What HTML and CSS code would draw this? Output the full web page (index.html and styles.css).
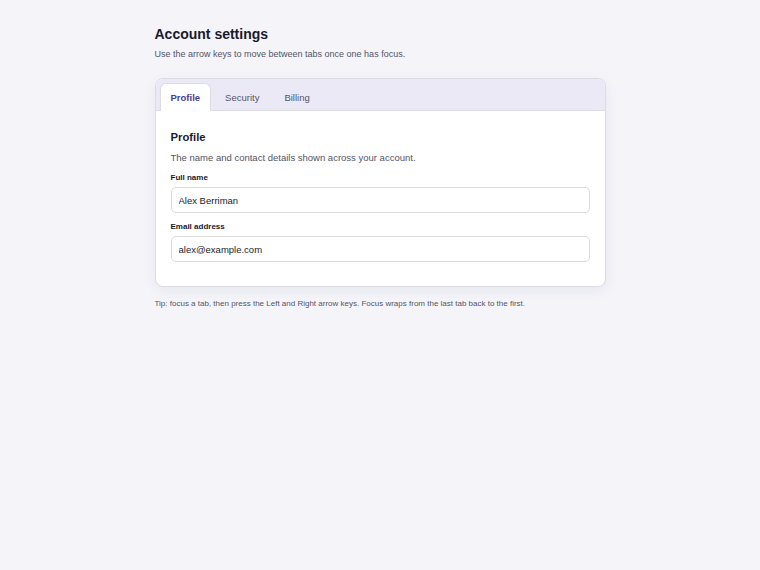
FILE: index.html
```html
<!DOCTYPE html>
<html lang="en">
<head>
<meta charset="utf-8">
<title>Account settings</title>
<link rel="stylesheet" href="styles.css">
</head>
<body>
<main class="page">
  <h1 class="title">Account settings</h1>
  <p class="subtitle">Use the arrow keys to move between tabs once one has focus.</p>
  <section class="card">
    <div class="tabs" role="tablist">
      <button class="tab active" role="tab" aria-selected="true">Profile</button>
      <button class="tab" role="tab" aria-selected="false">Security</button>
      <button class="tab" role="tab" aria-selected="false">Billing</button>
    </div>
    <div class="panel" role="tabpanel">
      <h2 class="panel-title">Profile</h2>
      <p class="panel-desc">The name and contact details shown across your account.</p>
      <label class="field">
        <span class="label">Full name</span>
        <input class="input" type="text" value="Alex Berriman">
      </label>
      <label class="field">
        <span class="label">Email address</span>
        <input class="input" type="email" value="alex@example.com">
      </label>
    </div>
  </section>
  <p class="tip">Tip: focus a tab, then press the Left and Right arrow keys. Focus wraps from the last tab back to the first.</p>
</main>
</body>
</html>
```

FILE: styles.css
```css
html, body {
  margin: 0;
  padding: 0;
  background: #f4f4f9;
  font-family: "Liberation Sans", Arial, sans-serif;
  color: #1c1b29;
}

.page {
  width: 451px;
  margin: 0 auto;
  padding-top: 24px;
}

.title {
  margin: 0;
  font-size: 14px;
  line-height: 20px;
  font-weight: 700;
  color: #1a1a2b;
}

.subtitle {
  margin: 4px 0 0;
  font-size: 9px;
  line-height: 12px;
  color: #545468;
}

.card {
  margin-top: 18px;
  background: #ffffff;
  border: 1px solid #dddbe8;
  border-radius: 8px;
  box-shadow: 0 4px 14px rgba(40, 30, 90, 0.06);
  overflow: hidden;
}

.tabs {
  display: flex;
  gap: 3px;
  padding: 4px 4px 0;
  background: #ece9f6;
  border-bottom: 1px solid #dddbe8;
}

.tab {
  box-sizing: border-box;
  height: 28px;
  font-family: inherit;
  font-size: 9.5px;
  line-height: 14px;
  padding: 0 10px;
  background: transparent;
  border: 1px solid transparent;
  border-bottom: none;
  border-radius: 6px 6px 0 0;
  color: #555468;
  margin-bottom: -1px;
  cursor: pointer;
}

.tab.active {
  background: #ffffff;
  border-color: #dddbe8;
  color: #4a3a9c;
  font-weight: 700;
}

.panel {
  padding: 18px 15px 24px;
}

.panel-title {
  margin: 0;
  font-size: 11.25px;
  line-height: 16px;
  font-weight: 700;
  color: #1a1a2b;
}

.panel-desc {
  margin: 6px 0 0;
  font-size: 9.5px;
  line-height: 14px;
  color: #545468;
}

.field {
  display: flex;
  flex-direction: column;
  margin-top: 7px;
}

.field + .field {
  margin-top: 8px;
}

.label {
  font-size: 8px;
  line-height: 12px;
  font-weight: 700;
  color: #1a1a2b;
  margin-bottom: 3px;
}

.input {
  box-sizing: border-box;
  height: 26px;
  padding: 0 7px;
  font-family: inherit;
  font-size: 9.5px;
  color: #1c1b29;
  background: #ffffff;
  border: 1px solid #d9d8e2;
  border-radius: 5px;
  outline: none;
}

.tip {
  margin: 11px 0 0;
  font-size: 8px;
  line-height: 12px;
  color: #545468;
}
```
